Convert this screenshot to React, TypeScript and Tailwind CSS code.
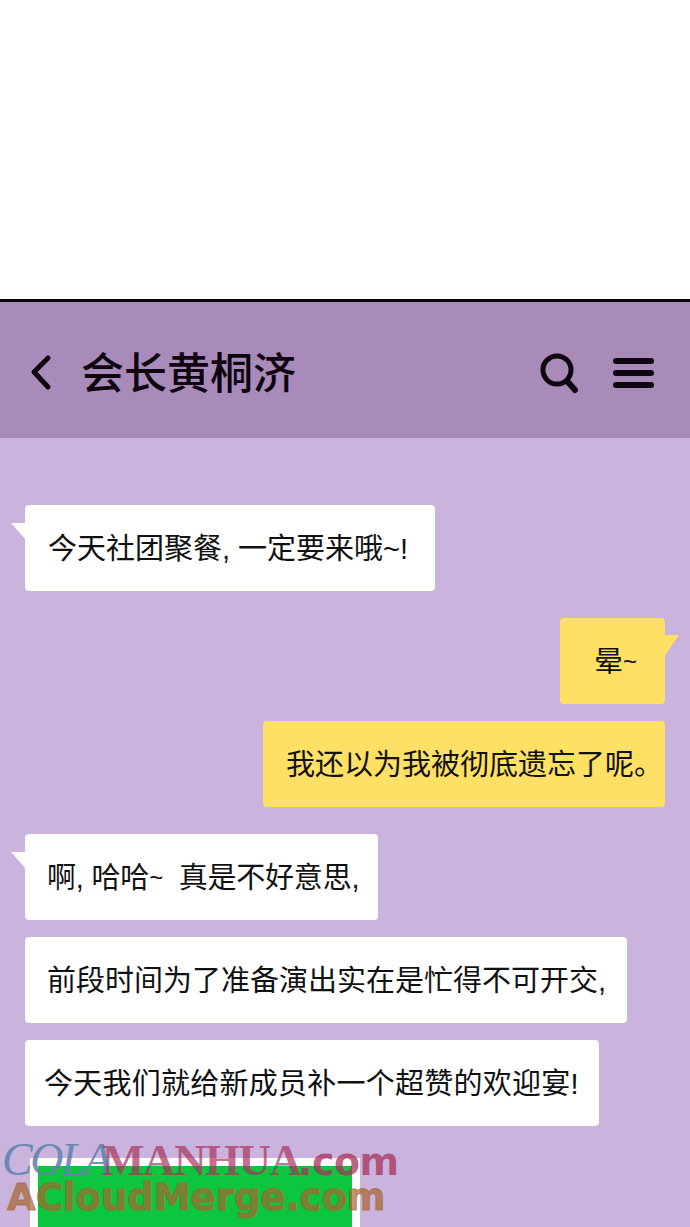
import type { ReactNode } from "react";

const CJK = "font-['Liberation_Sans','Noto_Sans_CJK_SC',sans-serif]";

type BubbleProps = {
  children: ReactNode;
  mine?: boolean;
  tail?: boolean;
  className?: string;
};

// chat bubble, tail is the little triangle at the top corner
function Bubble({ children, mine, tail, className }: BubbleProps) {
  return (
    <div
      className={`relative flex h-[86px] shrink-0 items-center rounded-[4px] pt-[2px] text-[29px] leading-none whitespace-pre text-[#111] ${
        mine ? "self-end bg-[#fee064]" : "self-start bg-white"
      } ${className ?? ""}`}
    >
      {tail && !mine && (
        <svg className="absolute top-[17px] -left-[14px]" width="15" height="20" viewBox="0 0 15 20">
          <path d="M0 1 L15 1 L15 18 Z" fill="#fff" />
        </svg>
      )}
      {tail && mine && (
        <svg className="absolute top-[16px] -right-[14px]" width="15" height="24" viewBox="0 0 15 24">
          <path d="M15 1 L0 1 L0 23 Z" fill="#fee064" />
        </svg>
      )}
      {children}
    </div>
  );
}

export default function App() {
  return (
    <div className={`relative h-[1227px] w-[690px] overflow-hidden bg-white ${CJK}`}>
      <div className="h-[299px]" />
      <div className="h-[3px] bg-[#0b0509]" />

      {/* header */}
      <div className="flex h-[136px] items-center justify-between bg-[#a98bba] pt-[5px] pr-[36px] pl-[28px] shadow-[inset_0_-4px_0_#a586b4]">
        <div className="flex items-center">
          <svg width="26" height="38" viewBox="0 0 26 38" fill="none" stroke="#0d0610" strokeWidth="5" strokeLinecap="round" strokeLinejoin="round">
            <path d="M20 4 L6 18 L20 33" />
          </svg>
          <span className="mt-[4px] ml-[27px] text-[43px] leading-none font-medium text-[#0d0610]">会长黄桐济</span>
        </div>
        <div className="flex items-center gap-[33px]">
          <svg width="42" height="42" viewBox="0 0 42 42" fill="none" stroke="#0d0610" strokeLinecap="round">
            <circle cx="19" cy="18" r="14" strokeWidth="5" />
            <path d="M29 29 L37 38" strokeWidth="6" />
          </svg>
          <div className="flex w-[41px] flex-col gap-[6px]">
            <div className="h-[6px] rounded-full bg-[#0d0610]" />
            <div className="h-[6px] rounded-full bg-[#0d0610]" />
            <div className="h-[6px] rounded-full bg-[#0d0610]" />
          </div>
        </div>
      </div>

      {/* messages */}
      <div className="flex h-[789px] flex-col bg-[#cab3dd] px-[25px] pt-[67px]">
        <Bubble tail className="w-[410px] pl-[23px]">今天社团聚餐, 一定要来哦~!</Bubble>
        <Bubble mine tail className="mt-[27px] w-[105px] pl-[34px]">
          晕<span className="text-[24px]">~</span>
        </Bubble>
        <Bubble mine className="mt-[17px] w-[402px] pl-[23px]">我还以为我被彻底遗忘了呢。</Bubble>
        <Bubble tail className="mt-[27px] w-[353px] pl-[22px] tracking-[-0.2px]">
          啊, 哈哈<span className="text-[24px]">~</span>  真是不好意思,
        </Bubble>
        <Bubble className="mt-[17px] w-[602px] pl-[22px]">前段时间为了准备演出实在是忙得不可开交,</Bubble>
        <Bubble className="mt-[17px] w-[574px] pl-[19px] tracking-[0.25px]">今天我们就给新成员补一个超赞的欢迎宴!</Bubble>
        <div className="mt-[32px] ml-[5px] h-[100px] w-[330px] shrink-0 border-[8px] border-white bg-[#0cc63f]" />
      </div>

      {/* watermarks over the page */}
      <div className="absolute top-[1144px] left-[2px] flex items-baseline leading-[32px] whitespace-pre">
        <span className="w-[100px] font-['Liberation_Serif',serif] text-[46px] tracking-[-2.5px] text-[#5f83ac]/90 italic">COLA</span>
        <span className="w-[196px] font-['Liberation_Serif',serif] text-[45px] font-bold tracking-[-1.5px] text-[#a8325a]/70">MANHUA</span>
        <span className="font-['DejaVu_Sans',sans-serif] text-[38px] font-bold tracking-[-0.5px] text-[#a8325a]/75">.com</span>
      </div>
      <div className="absolute top-[1183px] left-[7px] font-['DejaVu_Sans',sans-serif] text-[37px] leading-[30px] font-bold whitespace-pre text-[#a8642d]/70 [-webkit-text-stroke:1px_#a8642db0]">
        ACloudMerge.com
      </div>
    </div>
  );
}
